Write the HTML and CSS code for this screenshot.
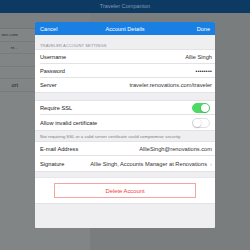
FILE: index.html
```html
<!DOCTYPE html>
<html>
<head>
<meta charset="utf-8">
<link rel="stylesheet" href="styles.css">
</head>
<body>
<div class="app">
  <div class="topbar">Traveler Companion</div>
  <div class="main">
    <div class="master">
      <div class="search"></div>
      <div class="cell"><span class="sub">ons.com</span></div>
      <div class="cell"><span class="sub">nt...</span></div>
      <div class="cell blank"></div>
      <div class="cell blank"></div>
      <div class="cell"><span class="strong">ort</span></div>
    </div>
    <div class="detail"></div>
  </div>
  <div class="modal">
    <div class="mhead">
      <span class="hbtn">Cancel</span>
      <span class="htitle">Account Details</span>
      <span class="hbtn">Done</span>
    </div>
    <div class="shead">TRAVELER ACCOUNT SETTINGS</div>
    <div class="group">
      <div class="row"><span class="label">Username</span><span class="value">Allie Singh</span></div>
      <div class="row"><span class="label">Password</span><span class="value dots">••••••••</span></div>
      <div class="row last"><span class="label">Server</span><span class="value">traveler.renovations.com/traveler</span></div>
    </div>
    <div class="gap"></div>
    <div class="group">
      <div class="row"><span class="label">Require SSL</span><span class="toggle on"></span></div>
      <div class="row last tall"><span class="label">Allow invalid certificate</span><span class="toggle"></span></div>
    </div>
    <div class="note">Not requiring SSL or a valid server certificate could compromise security.</div>
    <div class="group">
      <div class="row"><span class="label">E-mail Address</span><span class="value">AllieSingh@renovations.com</span></div>
      <div class="row last tall"><span class="label">Signature</span><span class="value">Allie Singh, Accounts Manager at Renovations</span><span class="chev">›</span></div>
    </div>
    <div class="gap small"></div>
    <div class="delwrap"><div class="delbtn">Delete Account</div></div>
  </div>
</div>
</body>
</html>
```
FILE: styles.css
```css
* { box-sizing: border-box; }
html, body { margin: 0; padding: 0; }
body {
  width: 250px;
  height: 250px;
  overflow: hidden;
  font-family: "Liberation Sans", Arial, sans-serif;
  background: #7a7d7e;
}
.app { position: relative; width: 250px; height: 250px; }
.topbar {
  height: 13px;
  background: #0c3a63;
  color: #8699ad;
  font-size: 5.6px;
  line-height: 13px;
  text-align: center;
}
.main { display: flex; height: 237px; }
.master {
  width: 90px;
  background: #828586;
  display: flex;
  flex-direction: column;
}
.search { height: 16px; background: #7d8081; border-bottom: 1px solid #737677; }
.cell {
  height: 12.5px;
  border-bottom: 1px solid #787b7c;
  display: flex;
  align-items: center;
  justify-content: flex-end;
  padding-right: 72px;
  font-size: 4.4px;
  color: #2d2f30;
  white-space: nowrap;
}
.cell .strong { font-size: 5.6px; color: #1d1e1f; }
.detail { flex: 1; background: #7a7d7e; }
.modal {
  position: absolute;
  left: 35px;
  top: 22px;
  width: 180px;
  height: 206px;
  background: #efeff2;
  display: flex;
  flex-direction: column;
  border-radius: 1px;
}
.mhead {
  flex: none;
  height: 13px;
  background: #1a7fe3;
  color: #fff;
  display: flex;
  align-items: center;
  justify-content: space-between;
  padding: 0 5px;
  font-size: 5.6px;
  position: relative;
  border-radius: 1px 1px 0 0;
}
.htitle {
  position: absolute;
  left: 0; right: 0;
  text-align: center;
  pointer-events: none;
}
.shead {
  flex: none;
  height: 15px;
  padding: 0 5px 2px;
  display: flex;
  align-items: flex-end;
  font-size: 4.1px;
  color: #8e8e93;
  letter-spacing: 0.1px;
}
.group {
  flex: none;
  background: #fff;
  box-shadow: 0 -0.5px 0 #d8d8dc, 0 0.5px 0 #d8d8dc;
}
.row {
  height: 14px;
  margin-left: 5px;
  padding-right: 3px;
  display: flex;
  align-items: center;
  border-bottom: 1px solid #e3e3e6;
  font-size: 5.7px;
  color: #222;
  white-space: nowrap;
}
.row.tall { height: 15px; }
.row.last { border-bottom: none; }
.label { flex: 1; }
.value { color: #333; }
.dots { letter-spacing: 0.3px; font-size: 5px; color: #111; }
.chev { color: #b8b8bc; margin-left: 3px; font-size: 6px; }
.gap { flex: none; height: 9px; }
.gap.small { height: 7px; }
.note {
  flex: none;
  height: 12px;
  padding: 0 5px;
  display: flex;
  align-items: center;
  font-size: 4.4px;
  color: #7c7c80;
}
.toggle {
  width: 18px;
  height: 10px;
  border-radius: 5px;
  border: 1px solid #e0e0e3;
  background: #fff;
  position: relative;
  margin-right: 2px;
}
.toggle::after {
  content: "";
  position: absolute;
  top: 0; left: 0;
  width: 8px; height: 8px;
  border-radius: 50%;
  background: #fff;
  box-shadow: 0 0.5px 1.5px rgba(0,0,0,0.35);
}
.toggle.on { background: #4cd964; border-color: #4cd964; }
.toggle.on::after { left: 8px; }
.delwrap {
  flex: none;
  height: 25px;
  background: #fff;
  display: flex;
  align-items: center;
  justify-content: center;
  box-shadow: 0 -0.5px 0 #e0e0e3, 0 0.5px 0 #d8d8dc;
}
.delbtn {
  width: 142px;
  height: 15px;
  border: 1px solid #f7a3a3;
  display: flex;
  align-items: center;
  justify-content: center;
  color: #f23d3d;
  font-size: 5.8px;
}
```
